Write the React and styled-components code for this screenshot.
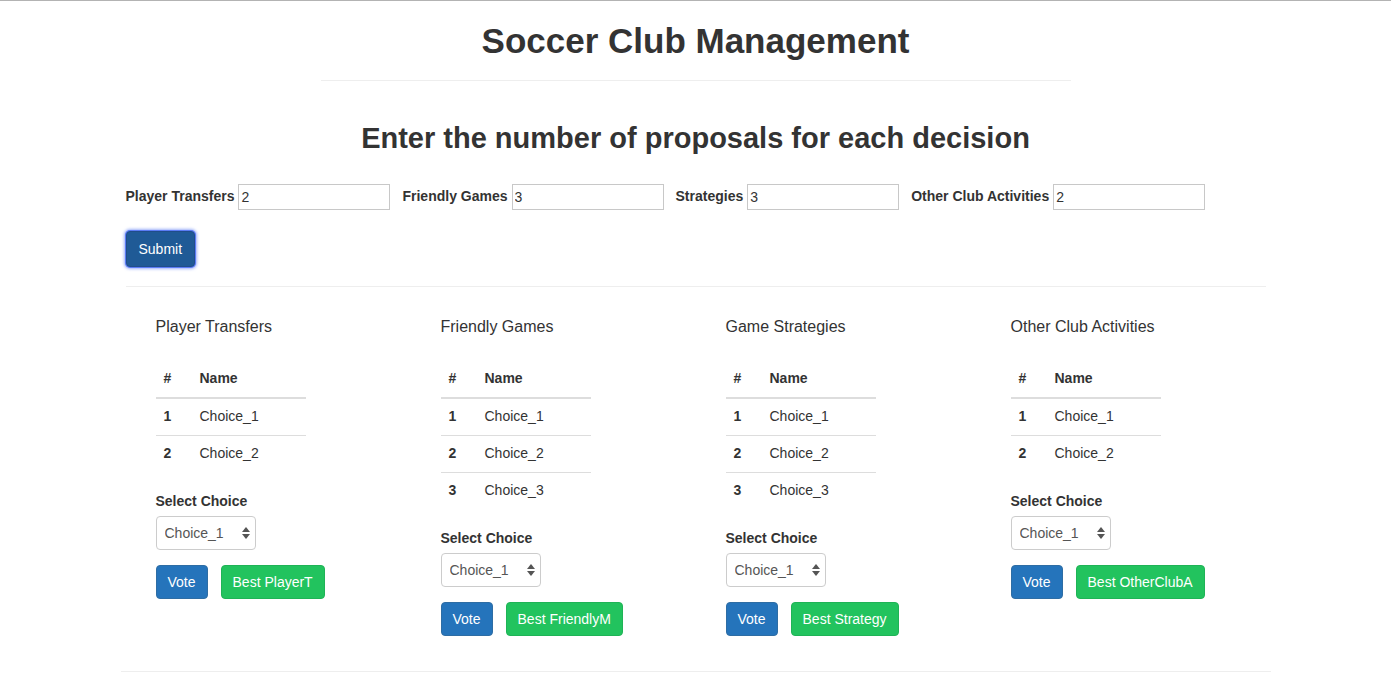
import styled, { createGlobalStyle } from "styled-components";

const GlobalStyle = createGlobalStyle`
  html, body { margin: 0; padding: 0; background: #fff; }
  body {
    font-family: "Liberation Sans", Arial, Helvetica, sans-serif;
    font-size: 14px;
    line-height: 1.42857;
    color: #333;
    border-top: 1px solid #b3b3b3;
  }
  * { box-sizing: border-box; }
`;

const Page = styled.div`
  width: 1170px;
  margin: 0 auto;
  padding: 0 15px;
`;

const Title = styled.h1`
  margin: 20px 0 0;
  font-size: 35px;
  line-height: 40px;
  font-weight: bold;
  text-align: center;
`;

const Rule = styled.hr`
  border: 0;
  border-top: 1px solid #eee;
  margin: ${(p) => p.$margin || "0"};
  width: ${(p) => p.$width || "auto"};
`;

const Subtitle = styled.h2`
  margin: 40px 0 0;
  font-size: 29px;
  line-height: 34px;
  font-weight: bold;
  text-align: center;
`;

const CountForm = styled.form`
  margin-top: 29px;
`;

const FieldRow = styled.div`
  display: flex;
  align-items: center;
  gap: 12px;
`;

const Field = styled.label`
  display: flex;
  align-items: center;
  gap: 4px;
  font-weight: bold;
  font-size: 14px;
`;

const NumberInput = styled.input`
  width: 152px;
  height: 26px;
  border: 1px solid #c8c8c8;
  padding: 1px 2px;
  font-family: inherit;
  font-size: 14px;
  color: #333;
  outline: none;
`;

const SubmitButton = styled.button`
  margin-top: 21px;
  height: 36px;
  padding: 0 12px;
  border-radius: 4px;
  border: 1px solid #204d8a;
  background: #1f5a96;
  color: #fff;
  font-family: inherit;
  font-size: 14px;
  box-shadow: 0 0 0 1px #5a7cf5, 0 0 3px 2px rgba(90, 124, 245, 0.6);
`;

const Decisions = styled.div`
  display: grid;
  grid-template-columns: repeat(4, 285px);
  padding-left: 30px;
  align-items: start;
`;

const Column = styled.div`
  display: flex;
  flex-direction: column;
  align-items: flex-start;
`;

const ColumnTitle = styled.h4`
  margin: 30px 0 0;
  font-size: 16px;
  line-height: 20px;
  font-weight: 500;
`;

const Table = styled.table`
  width: 150px;
  margin-top: 24px;
  margin-bottom: 19px;
  border-collapse: collapse;
  border-spacing: 0;
`;

const Th = styled.th`
  text-align: left;
  font-weight: bold;
  padding: 8px;
  height: 37px;
  border-bottom: 2px solid #ddd;
  width: ${(p) => p.$w || "auto"};
`;

const Td = styled.td`
  padding: 8px;
  height: 37px;
  font-weight: ${(p) => (p.$bold ? "bold" : "normal")};
  border-top: ${(p) => (p.$first ? "none" : "1px solid #ddd")};
`;

const SelectLabel = styled.div`
  font-weight: bold;
  font-size: 14px;
  line-height: 20px;
  margin-bottom: 5px;
`;

const SelectWrap = styled.div`
  position: relative;
  width: 100px;
  height: 34px;
`;

const Select = styled.select`
  appearance: none;
  width: 100%;
  height: 100%;
  border: 1px solid #ccc;
  border-radius: 4px;
  background: #fff;
  padding: 0 8px;
  font-family: inherit;
  font-size: 14px;
  color: #555;
`;

const Arrows = styled.svg`
  position: absolute;
  right: 6px;
  top: 11px;
  pointer-events: none;
`;

const Actions = styled.div`
  display: flex;
  gap: 13px;
  margin-top: 15px;
`;

const ActionButton = styled.button`
  height: 34px;
  padding: 0 11px;
  border-radius: 4px;
  font-family: inherit;
  font-size: 14px;
  color: #fff;
  border: 1px solid ${(p) => (p.$variant === "green" ? "#1fb356" : "#2e6da4")};
  background: ${(p) => (p.$variant === "green" ? "#22c35e" : "#2574bb")};
`;

const decisions = [
  { title: "Player Transfers", count: 2, best: "Best PlayerT" },
  { title: "Friendly Games", count: 3, best: "Best FriendlyM" },
  { title: "Game Strategies", count: 3, best: "Best Strategy" },
  { title: "Other Club Activities", count: 2, best: "Best OtherClubA" },
];

const fields = [
  ["Player Transfers", "2"],
  ["Friendly Games", "3"],
  ["Strategies", "3"],
  ["Other Club Activities", "2"],
];

function DecisionColumn({ title, count, best }) {
  const rows = Array.from({ length: count }, (_, i) => i + 1);
  return (
    <Column>
      <ColumnTitle>{title}</ColumnTitle>
      <Table>
        <thead>
          <tr>
            <Th $w="36px">#</Th>
            <Th>Name</Th>
          </tr>
        </thead>
        <tbody>
          {rows.map((n) => (
            <tr key={n}>
              <Td $bold $first={n === 1}>{n}</Td>
              <Td $first={n === 1}>Choice_{n}</Td>
            </tr>
          ))}
        </tbody>
      </Table>
      <SelectLabel>Select Choice</SelectLabel>
      <SelectWrap>
        <Select defaultValue="Choice_1">
          {rows.map((n) => (
            <option key={n}>Choice_{n}</option>
          ))}
        </Select>
        <Arrows width="8" height="12" viewBox="0 0 8 12">
          <path d="M4 0 L8 5 L0 5 Z" fill="#555" />
          <path d="M0 7 L8 7 L4 12 Z" fill="#555" />
        </Arrows>
      </SelectWrap>
      <Actions>
        <ActionButton>Vote</ActionButton>
        <ActionButton $variant="green">{best}</ActionButton>
      </Actions>
    </Column>
  );
}

export default function App() {
  return (
    <>
      <GlobalStyle />
      <Page>
        <Title>Soccer Club Management</Title>
        <Rule $width="750px" $margin="19px auto 0" />
        <Subtitle>Enter the number of proposals for each decision</Subtitle>
        <CountForm onSubmit={(e) => e.preventDefault()}>
          <FieldRow>
            {fields.map(([label, value]) => (
              <Field key={label}>
                {label}
                <NumberInput defaultValue={value} />
              </Field>
            ))}
          </FieldRow>
          <SubmitButton type="submit">Submit</SubmitButton>
        </CountForm>
        <Rule $margin="19px 0 0" />
        <Decisions>
          {decisions.map((d) => (
            <DecisionColumn key={d.title} {...d} />
          ))}
        </Decisions>
        <Rule $margin="35px -5px 0" />
      </Page>
    </>
  );
}
